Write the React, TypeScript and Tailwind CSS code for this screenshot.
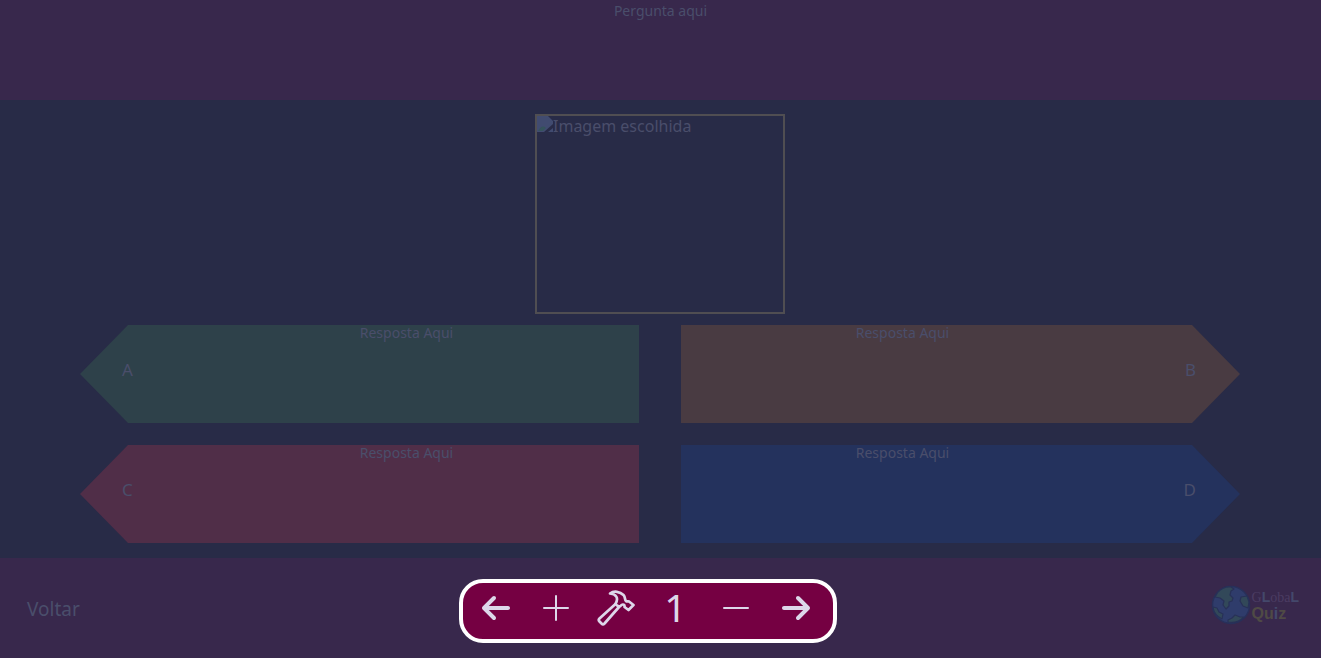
import { ReactNode, useState } from "react";
import { FaArrowLeft, FaArrowRight } from "react-icons/fa6";

type Option = { letter: string; fill: string; side: "left" | "right" };

const options: Option[] = [
  { letter: "A", fill: "bg-[#2e414a]", side: "left" },
  { letter: "B", fill: "bg-[#493b42]", side: "right" },
  { letter: "C", fill: "bg-[#502e48]", side: "left" },
  { letter: "D", fill: "bg-[#24325d]", side: "right" },
];

function Answer({ letter, fill, side }: Option) {
  const left = side === "left";
  return (
    <label
      className={`flex h-[98px] text-[#4a4e6b] ${fill} ${
        left
          ? "pl-[42px] [clip-path:polygon(48px_0,100%_0,100%_100%,48px_100%,0_50%)]"
          : "flex-row-reverse pr-[44px] [clip-path:polygon(0_0,calc(100%-48px)_0,100%_50%,calc(100%-48px)_100%,0_100%)]"
      }`}
    >
      <span className="flex w-[28px] items-center pb-2 text-[17px]">
        <span className={left ? "" : "ml-auto"}>{letter}</span>
      </span>
      <textarea
        placeholder="Resposta Aqui"
        className={`min-w-0 flex-1 resize-none bg-transparent text-center text-[14px] leading-4 outline-none placeholder:overflow-visible placeholder:text-[#4a4e6b] ${
          left ? "pl-6" : "pr-11"
        }`}
      />
    </label>
  );
}

function Tool({ label, onClick, children }: { label: string; onClick?: () => void; children: ReactNode }) {
  return (
    <button type="button" aria-label={label} onClick={onClick} className="flex size-[60px] items-center justify-center pb-1.5">
      {children}
    </button>
  );
}

function Hammer() {
  return (
    <svg viewBox="0 0 38 36" className="h-9 w-[38px]" fill="none" stroke="currentColor" strokeWidth="2.7" strokeLinejoin="round" strokeLinecap="round">
      <path d="M13 3.500C17 0.500 23 1.500 26.500 5C28.500 7 27.500 9.500 29 11C30 12 31 11 32 11.500L36.500 15L31.500 20L27.500 17C28 14.500 26 14 24.500 15C23 17 21 17 18.500 14C22 8 19 4 13 3.500Z" />
      <path d="M18.500 14L2.500 28.500C1.500 29.500 1.500 30.500 2.500 31.500L4.500 33.500C5.500 34.500 6.500 34.500 7.500 33.500L22 17" />
    </svg>
  );
}

function Globe() {
  return (
    <svg viewBox="0 0 40 40" className="size-10">
      <circle cx="20" cy="20" r="18.500" fill="#2f3c6b" stroke="#28305a" strokeWidth="1.500" />
      <path
        d="M7 7Q13 1 20 2L23 4L20 6L19 10L22 13L21 16L18 17L18 21L15 24L12 20L13 16L9 13L4 12Z M30 12L36 11L38 17L37 23L32 21L29 16Z M2 22L6 23L8 27L12 29L11 34Q3 30 2 22Z M17 35L21 33L24 30L29 32L33 32Q26 39 17 37Z"
        fill="#324859"
        stroke="#283157"
        strokeWidth="1.200"
        strokeLinejoin="round"
      />
    </svg>
  );
}

export default function App() {
  const [count, setCount] = useState(1);
  return (
    <div className="relative flex min-h-screen flex-col bg-[#282b47] font-['Noto_Sans',sans-serif] text-[#4a4e6b]">
      <header className="flex h-[100px] bg-[#38284c]">
        <textarea
          aria-label="Pergunta"
          placeholder="Pergunta aqui"
          className="flex-1 resize-none bg-transparent pt-[3px] text-center text-[14px] leading-4 outline-none placeholder:overflow-visible placeholder:text-[#4a4e6b]"
        />
      </header>

      <main className="flex flex-1 flex-col items-center pt-[14px] pr-[81px] pb-[15px] pl-20">
        <div role="img" aria-label="Imagem escolhida" className="flex h-[200px] w-[250px] items-start border-2 border-[#504e52] text-[16px] leading-5">
          <svg viewBox="0 0 16 16" className="size-4 shrink-0">
            <path d="M0 0H11L16 5V8L7 16H0Z" fill="#414b70" />
            <path d="M1 15Q5 8 9 12L6 15Z" fill="#35535c" />
            <path d="M16 12V16H11Z" fill="#414b70" />
          </svg>
          <span>Imagem escolhida</span>
        </div>
        <div className="mt-[11px] grid w-full grid-cols-2 gap-x-[42px] gap-y-[22px]">
          {options.map((o) => (
            <Answer key={o.letter} {...o} />
          ))}
        </div>
      </main>

      <footer className="flex h-[100px] items-center justify-between bg-[#38284c] pr-[22px] pl-[27px]">
        <a href="#voltar" className="pt-0.5 text-[19px]">Voltar</a>
        <div className="flex items-center pb-1.5">
          <Globe />
          <div className="flex flex-col pl-px leading-4">
            <span className="font-['Liberation_Serif',serif] text-[14px] text-[#4b3c62]">
              G<b className="font-['Liberation_Sans',sans-serif] text-[#44486b]">L</b>oba<b className="font-['Liberation_Sans',sans-serif] text-[#44486b]">L</b>
            </span>
            <span className="font-['Liberation_Sans',sans-serif] text-[16px] font-bold text-[#4f4a45]">
              Qu<span className="text-[#44486b]">i</span>z
            </span>
          </div>
        </div>
      </footer>

      <div className="absolute bottom-[15px] left-1/2 -ml-[202px] flex h-16 w-[378px] items-center justify-center rounded-[24px] border-4 border-white bg-[#750042] pr-1 text-[#ddd7ea]">
        <Tool label="Anterior"><FaArrowLeft size={32} /></Tool>
        <Tool label="Adicionar" onClick={() => setCount(count + 1)}>
          <svg viewBox="0 0 26 26" className="size-[26px]" stroke="currentColor" strokeWidth="2" strokeLinecap="round">
            <path d="M13 1V25M1 13H25" />
          </svg>
        </Tool>
        <Tool label="Construir"><Hammer /></Tool>
        <output className="flex size-[60px] items-center justify-center pb-2 text-[39px]">{count}</output>
        <Tool label="Remover" onClick={() => setCount(Math.max(1, count - 1))}>
          <svg viewBox="0 0 26 26" className="size-[26px]" stroke="currentColor" strokeWidth="2" strokeLinecap="round">
            <path d="M1 13H25" />
          </svg>
        </Tool>
        <Tool label="Próximo"><FaArrowRight size={32} /></Tool>
      </div>
    </div>
  );
}
